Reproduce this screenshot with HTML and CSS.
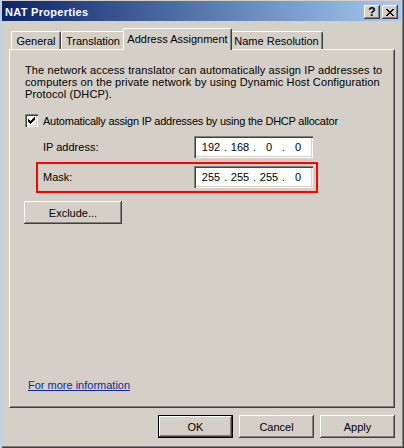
FILE: index.html
```html
<!DOCTYPE html>
<html>
<head>
<meta charset="utf-8">
<link rel="stylesheet" href="styles.css">
</head>
<body>
<div class="window">
  <div class="titlebar">
    <span class="title">NAT Properties</span>
    <div class="caps">
      <span class="cbtn help">?</span>
      <span class="cbtn">
        <svg width="8" height="7" viewBox="0 0 8 7"><path d="M0 0h2v1H0zM6 0h2v1H6zM1 1h2v1H1zM5 1h2v1H5zM2 2h4v1H2zM3 3h2v1H3zM2 4h4v1H2zM1 5h2v1H1zM5 5h2v1H5zM0 6h2v1H0zM6 6h2v1H6z" fill="#000"/></svg>
      </span>
    </div>
  </div>
  <div class="client">
    <div class="tabs">
      <div class="tab t-general">General</div>
      <div class="tab t-translation">Translation</div>
      <div class="tab t-address active">Address Assignment</div>
      <div class="tab t-name">Name Resolution</div>
    </div>
    <div class="panel">
      <p class="desc">The network access translator can automatically assign IP addresses to<br>computers on the private network by using Dynamic Host Configuration<br>Protocol (DHCP).</p>
      <div class="check">
        <span class="cbox">
          <svg width="13" height="13" viewBox="0 0 13 13"><path d="M3 5h1v3H3zM4 6h1v3H4zM5 7h1v3H5zM6 6h1v3H6zM7 5h1v3H7zM8 4h1v3H8zM9 3h1v3H9z" fill="#000"/></svg>
        </span>
        <span class="check-text">Automatically assign IP addresses by using the DHCP allocator</span>
      </div>
      <div class="field-row">
        <span class="lbl">IP address:</span>
        <div class="ipfield"><span class="oct">192</span><span class="dot">.</span><span class="oct">168</span><span class="dot">.</span><span class="oct">0</span><span class="dot">.</span><span class="oct">0</span></div>
      </div>
      <div class="field-row hl">
        <span class="lbl">Mask:</span>
        <div class="ipfield"><span class="oct">255</span><span class="dot">.</span><span class="oct">255</span><span class="dot">.</span><span class="oct">255</span><span class="dot">.</span><span class="oct">0</span></div>
      </div>
      <button class="btn exclude">Exclude...</button>
      <a class="more">For more information</a>
    </div>
    <div class="footer">
      <button class="btn ok">OK</button>
      <button class="btn">Cancel</button>
      <button class="btn">Apply</button>
    </div>
  </div>
</div>
</body>
</html>
```
FILE: styles.css
```css
* { box-sizing: border-box; }
html, body { margin: 0; padding: 0; }
body {
  width: 404px;
  height: 448px;
  overflow: hidden;
  background: #d4d0c8;
  font-family: "Liberation Sans", Arial, sans-serif;
  font-size: 11px;
  color: #000;
}
.window {
  width: 404px;
  height: 448px;
  display: flex;
  flex-direction: column;
  padding: 1px 3px 2px 2px;
  background: #d4d0c8;
  box-shadow: inset 2px 0 #bcd2ea, inset -1px -1px #404040, inset -2px -2px #808080;
}
.titlebar {
  height: 20px;
  flex: none;
  display: flex;
  align-items: flex-start;
  justify-content: space-between;
  padding: 0 3px 0 3px;
  background: linear-gradient(to right, #0a246a, #a6caf0);
}
.title {
  color: #fff;
  font-weight: bold;
  line-height: 13px;
  padding-top: 5px;
  letter-spacing: 0.3px;
}
.caps {
  display: flex;
  gap: 2px;
  padding-top: 4px;
}
.cbtn {
  width: 16px;
  height: 14px;
  display: flex;
  align-items: center;
  justify-content: center;
  background: #d4d0c8;
  box-shadow: inset -1px -1px #404040, inset 1px 1px #fff, inset -2px -2px #808080;
}
.cbtn.help {
  font-weight: bold;
  font-size: 12px;
  line-height: 12px;
}
.client {
  flex: 1;
  display: flex;
  flex-direction: column;
  padding: 7px 6px 0 7px;
}
.tabs {
  display: flex;
  align-items: flex-end;
  height: 21px;
  padding-left: 2px;
  position: relative;
  z-index: 1;
}
.tab {
  height: 18px;
  border-top: 1px solid #fff;
  border-left: 1px solid #fff;
  border-right: 1px solid #404040;
  border-radius: 2px 2px 0 0;
  box-shadow: inset -1px 0 #808080;
  padding-top: 3px;
  line-height: 13px;
  text-align: center;
  white-space: nowrap;
  background: #d4d0c8;
}
.t-general { width: 50px; }
.t-translation { width: 64px; }
.t-address { width: 109px; }
.t-name { width: 93px; }
.tab.active {
  height: 22px;
  margin: 0 -2px -1px -2px;
  padding-top: 4px;
  position: relative;
  z-index: 2;
}
.panel {
  height: 359px;
  flex: none;
  display: flex;
  flex-direction: column;
  align-items: flex-start;
  border-top: 1px solid #fff;
  border-left: 1px solid #fff;
  border-right: 1px solid #404040;
  border-bottom: 1px solid #404040;
  box-shadow: inset -1px -1px #808080;
  padding: 14px 0 16px 15px;
}
.desc {
  margin: 0;
  line-height: 12px;
  white-space: nowrap;
  letter-spacing: 0.12px;
}
.check {
  margin-top: 14px;
  height: 13px;
  display: flex;
  align-items: center;
  gap: 5px;
  white-space: nowrap;
}
.check-text { letter-spacing: -0.22px; }
.cbox {
  width: 13px;
  height: 13px;
  background: #fff;
  box-shadow: inset 1px 1px #808080, inset 2px 2px #404040, inset -1px -1px #fff, inset -2px -2px #d4d0c8;
}
.cbox svg { display: block; }
.field-row {
  margin-top: 5px;
  margin-left: 11px;
  width: 282px;
  border: 2px solid transparent;
  padding: 2px 3px 2px 5px;
  display: flex;
  align-items: center;
}
.field-row.hl {
  margin-top: 0;
  border-color: #ff0000;
  padding-bottom: 3px;
}
.lbl { width: 151px; }
.ipfield {
  width: 119px;
  height: 22px;
  display: flex;
  align-items: center;
  padding-left: 6px;
  background: #fff;
  box-shadow: inset 1px 1px #808080, inset 2px 2px #404040, inset -1px -1px #fff, inset -2px -2px #d4d0c8;
}
.oct { width: 22px; text-align: center; }
.dot { width: 7px; text-align: center; }
.btn {
  font: inherit;
  color: #000;
  height: 23px;
  width: 75px;
  padding: 0;
  border: none;
  background: #d4d0c8;
  box-shadow: inset -1px -1px #404040, inset 1px 1px #fff, inset -2px -2px #808080;
}
.exclude {
  width: 98px;
  margin-top: 8px;
  margin-left: -1px;
}
.more {
  margin-top: auto;
  margin-left: 3px;
  line-height: 12px;
  color: #0a2a9a;
  text-decoration: underline;
}
.footer {
  display: flex;
  justify-content: flex-end;
  gap: 6px;
  margin-top: 7px;
}
.btn.ok {
  box-shadow: inset 0 0 0 1px #000, inset -2px -2px #404040, inset 2px 2px #fff, inset -3px -3px #808080;
}
```
